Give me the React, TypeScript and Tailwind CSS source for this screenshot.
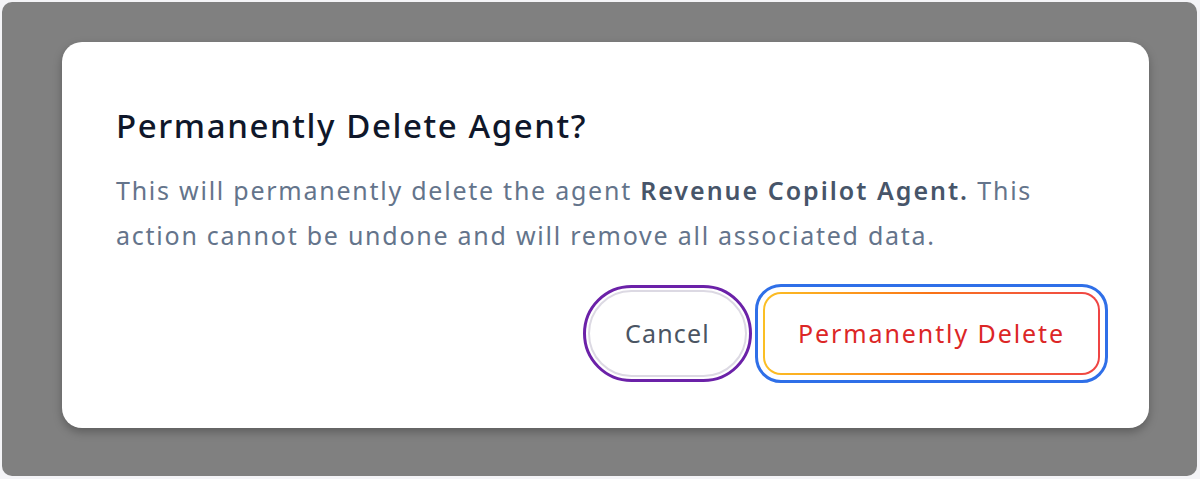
import React from "react";

export default function App() {
  return (
    <div
      className="w-[1200px] h-[479px] bg-[#f4f4f7] pt-[2px] pl-[2px] pr-[3px] pb-[3px]"
      style={{ fontFamily: '"Noto Sans", "Open Sans", sans-serif' }}
    >
      <div className="h-full w-full rounded-[10px] bg-[#808080] pt-[40px] pl-[60px] pr-[48px]">
        <div className="h-[386px] rounded-[20px] bg-white pt-[62px] pl-[54px] pr-[40px] shadow-[0_4px_10px_rgba(0,0,0,0.28)]">
          <h2 className="text-[33px] leading-[44px] font-medium text-[#0f172a] tracking-[1.6px]">
            Permanently Delete Agent?
          </h2>
          <p className="mt-[20px] text-[25px] leading-[45px] text-[#64748b] tracking-[1.75px] whitespace-nowrap">
            This will permanently delete the agent{" "}
            <span className="font-semibold text-[#475569] tracking-[2px]">Revenue Copilot Agent.</span> This
            <br />
            action cannot be undone and will remove all associated data.
          </p>
          <div className="mt-[32px] mr-[9px] flex items-center justify-end gap-[16px]">
            <button className="h-[87px] w-[159px] rounded-full border-2 border-[#dcd9e3] bg-white text-[25px] text-[#4b5563] tracking-[1.2px] outline-3 outline-offset-2 outline-[#6b21a8]">
              Cancel
            </button>
            <div className="rounded-[18px] bg-linear-to-r from-[#fbbf24] via-[#f97316] to-[#ef4444] p-[2px] outline-[3px] outline-offset-[5px] outline-[#2f6fe8]">
              <button className="flex h-[79px] w-[333px] items-center justify-center rounded-[16px] bg-white text-[25px] text-[#dc2626] tracking-[1.9px]">
                Permanently Delete
              </button>
            </div>
          </div>
        </div>
      </div>
    </div>
  );
}
